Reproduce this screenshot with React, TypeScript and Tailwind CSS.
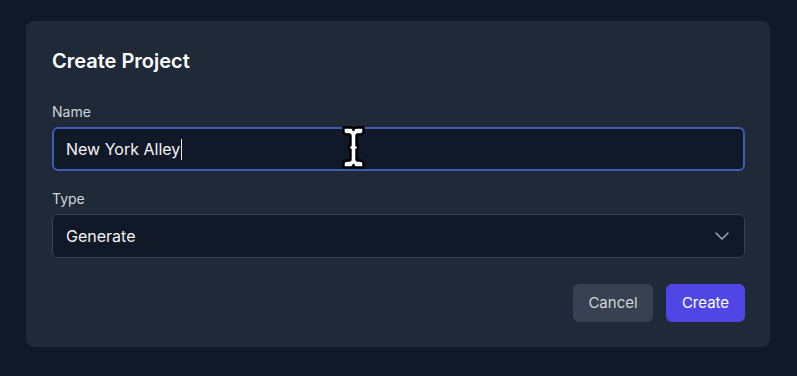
import { ChevronDown } from 'lucide-react';

function IBeam() {
  return (
    <svg width="23" height="43" viewBox="0 0 23 43" className="absolute left-[290px] top-[-1px] pointer-events-none">
      <path
        d="M1.5 1.5 H8.5 Q11.5 1.5 11.5 4 Q11.5 1.5 14.5 1.5 H21.5 V5.5 Q21.5 8.5 17 8.5 H15.5 Q14.5 8.5 14.5 10 V19.5 H16 V23.5 H14.5 V33 Q14.5 34.5 15.5 34.5 H17 Q21.5 34.5 21.5 37.5 V41.5 H14.5 Q11.5 41.5 11.5 39 Q11.5 41.5 8.5 41.5 H1.5 V37.5 Q1.5 34.5 6 34.5 H7.5 Q8.5 34.5 8.5 33 V23.5 H7 V19.5 H8.5 V10 Q8.5 8.5 7.5 8.5 H6 Q1.5 8.5 1.5 5.5 Z"
        fill="#ffffff"
        stroke="#000000"
        strokeWidth="2.4"
        strokeLinejoin="round"
      />
    </svg>
  );
}

export default function App() {
  return (
    <div className="w-[797px] h-[376px] bg-[#111827] pt-[21px] px-[26px] font-['Inter',sans-serif]">
      <div className="w-[744px] rounded-lg bg-[#1f2937] pl-[26px] pr-[25px] pt-[26px] pb-[25px]">
        {/* Header */}
        <h2 className="text-xl font-semibold text-white leading-7">Create Project</h2>

        {/* Name */}
        <div className="mt-[27px]">
          <label className="block text-sm text-gray-300 leading-5 mb-[5px]">Name</label>
          <div className="relative">
            <div className="h-[44px] w-full rounded-md bg-[#111827] border-2 border-[#3b5db5] flex items-center px-[12px] text-base text-gray-100">
              New York Alley
              <span className="inline-block w-px h-[21px] bg-gray-200 ml-px" />
            </div>
            <IBeam />
          </div>
        </div>

        {/* Type */}
        <div className="mt-[18px]">
          <label className="block text-sm text-gray-300 leading-5 mb-[5px]">Type</label>
          <div className="h-[44px] w-full rounded-md bg-[#111827] border border-[#374151] flex items-center justify-between pl-[13px] pr-[10px] text-base text-gray-100">
            <span>Generate</span>
            <ChevronDown size={24} strokeWidth={1.6} className="text-gray-400" />
          </div>
        </div>

        {/* Actions */}
        <div className="mt-[26px] flex justify-end gap-[13px]">
          <button className="h-[38px] w-[80px] rounded-md bg-[#374151] text-[15px] text-gray-300">Cancel</button>
          <button className="h-[38px] w-[79px] rounded-md bg-[#4f46e5] text-[15px] text-white">Create</button>
        </div>
      </div>
    </div>
  );
}
